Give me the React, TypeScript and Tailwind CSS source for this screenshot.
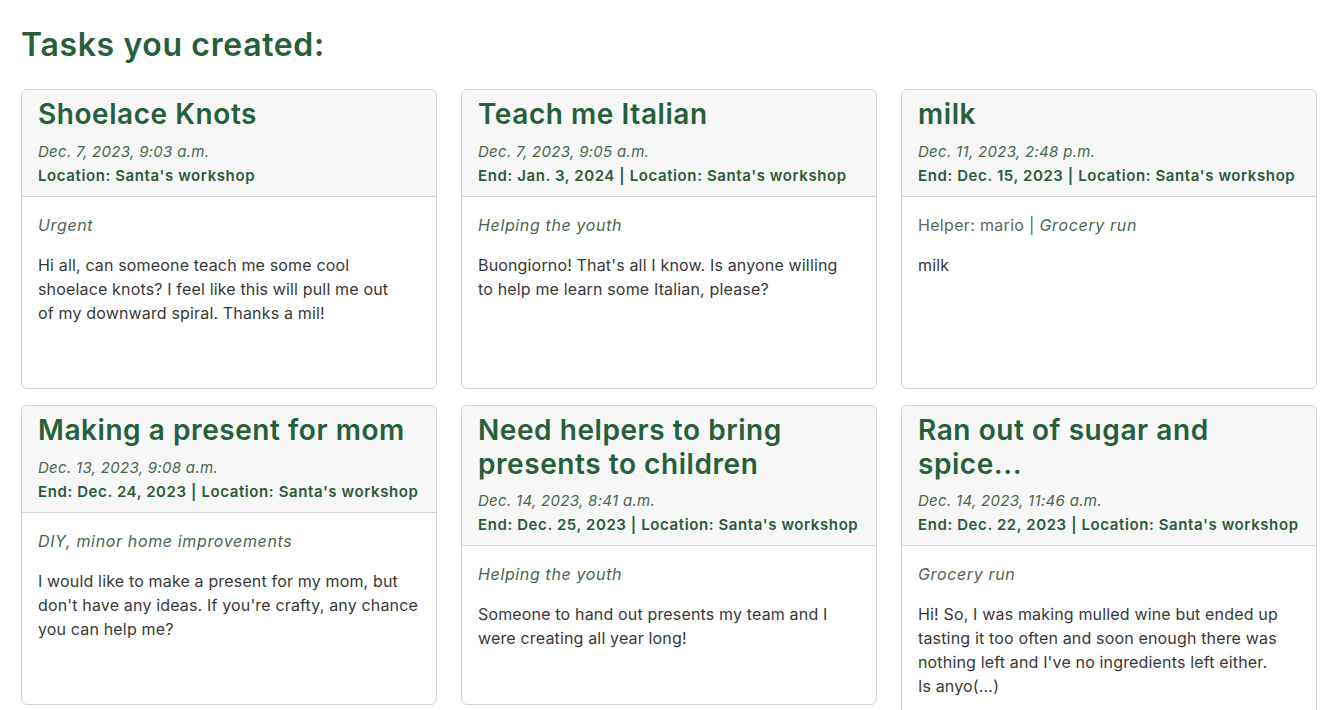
import React from "react";

interface Task {
  title: string;
  created: string;
  end?: string;
  location: string;
  helper?: string;
  category: string;
  description: string;
}

// line breaks follow the original layout
const tasks: Task[] = [
  {
    title: "Shoelace Knots",
    created: "Dec. 7, 2023, 9:03 a.m.",
    location: "Santa's workshop",
    category: "Urgent",
    description:
      "Hi all, can someone teach me some cool\nshoelace knots? I feel like this will pull me out\nof my downward spiral. Thanks a mil!",
  },
  {
    title: "Teach me Italian",
    created: "Dec. 7, 2023, 9:05 a.m.",
    end: "Jan. 3, 2024",
    location: "Santa's workshop",
    category: "Helping the youth",
    description:
      "Buongiorno! That's all I know. Is anyone willing\nto help me learn some Italian, please?",
  },
  {
    title: "milk",
    created: "Dec. 11, 2023, 2:48 p.m.",
    end: "Dec. 15, 2023",
    location: "Santa's workshop",
    helper: "mario",
    category: "Grocery run",
    description: "milk",
  },
  {
    title: "Making a present for mom",
    created: "Dec. 13, 2023, 9:08 a.m.",
    end: "Dec. 24, 2023",
    location: "Santa's workshop",
    category: "DIY, minor home improvements",
    description:
      "I would like to make a present for my mom, but\ndon't have any ideas. If you're crafty, any chance\nyou can help me?",
  },
  {
    title: "Need helpers to bring presents to children",
    created: "Dec. 14, 2023, 8:41 a.m.",
    end: "Dec. 25, 2023",
    location: "Santa's workshop",
    category: "Helping the youth",
    description:
      "Someone to hand out presents my team and I\nwere creating all year long!",
  },
  {
    title: "Ran out of sugar and spice...",
    created: "Dec. 14, 2023, 11:46 a.m.",
    end: "Dec. 22, 2023",
    location: "Santa's workshop",
    category: "Grocery run",
    description:
      "Hi! So, I was making mulled wine but ended up\ntasting it too often and soon enough there was\nnothing left and I've no ingredients left either.\nIs anyo(...)",
  },
];

const TaskCard: React.FC<{ task: Task }> = ({ task }) => {
  return (
    <div className="flex min-h-[300px] flex-col rounded-md border border-[#d3d3d3] bg-white">
      <div className="rounded-t-md border-b border-[#d3d3d3] bg-[#f7f7f7] px-4 py-2">
        <h3 className="mb-2 text-[28px] font-semibold leading-[1.2] tracking-[0.02em] text-[#26603a]">
          {task.title}
        </h3>
        <p className="text-[15px] italic leading-6 tracking-[0.02em] text-[#4a6650]">
          {task.created}
        </p>
        <p className="text-[15px] font-semibold leading-6 tracking-[0.04em] text-[#2c5a39]">
          {task.end ? `End: ${task.end} | ` : ""}Location: {task.location}
        </p>
      </div>
      <div className="flex-1 p-4">
        <p className="mb-4 text-base leading-6 tracking-[0.02em] text-[#566a5c]">
          {task.helper ? `Helper: ${task.helper} | ` : ""}
          <span className="italic tracking-[0.04em] text-[#4a6650]">{task.category}</span>
        </p>
        <p className="whitespace-pre-line text-base leading-6 tracking-[0.01em] text-[#383838]">
          {task.description}
        </p>
      </div>
    </div>
  );
};

export default function App() {
  return (
    <div className="min-h-screen bg-white pl-[21px] pt-[26px] font-['Inter',sans-serif]">
      <h2 className="mb-[25px] text-[32px] font-semibold leading-[38px] tracking-[0.02em] text-[#26603a]">
        Tasks you created:
      </h2>
      <div className="grid grid-cols-[416px_416px_416px] items-start gap-x-6 gap-y-4">
        {tasks.map((task) => (
          <TaskCard key={task.title} task={task} />
        ))}
      </div>
    </div>
  );
}
